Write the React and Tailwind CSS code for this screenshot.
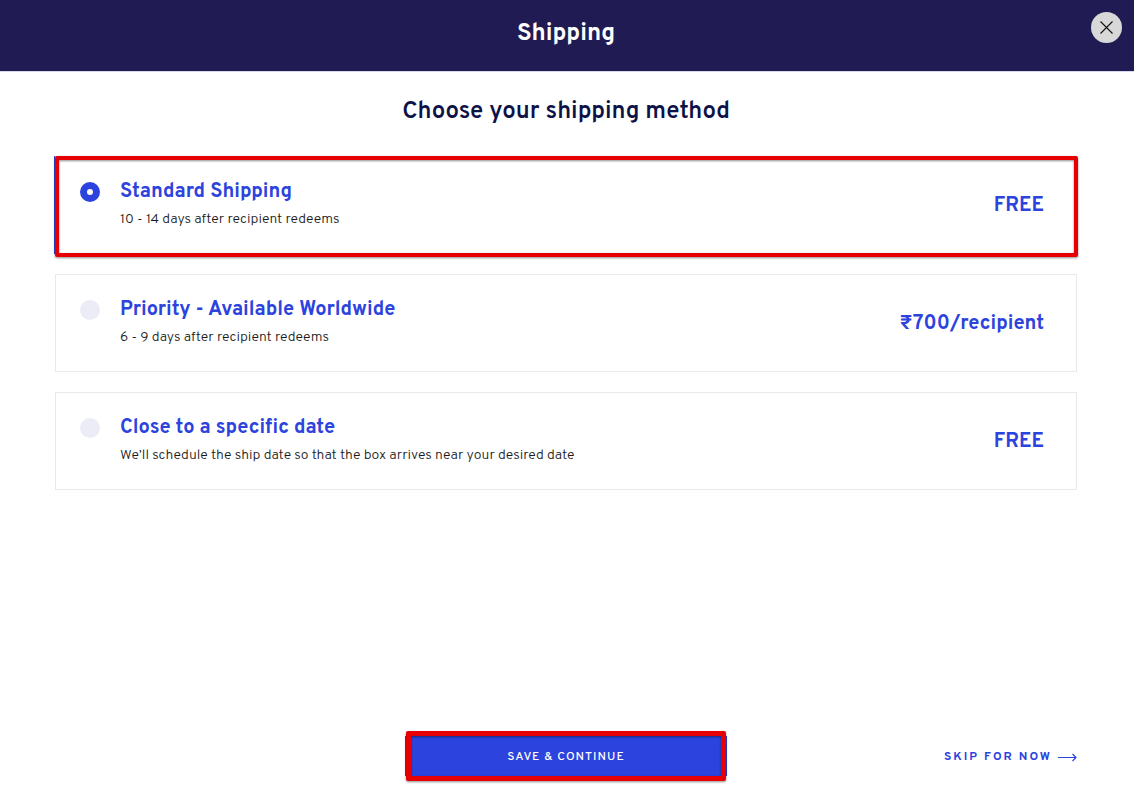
import React, { useState } from "react";

const methods = [
  {
    id: "standard",
    title: "Standard Shipping",
    description: "10 - 14 days after recipient redeems",
    price: "FREE"
  },
  {
    id: "priority",
    title: "Priority - Available Worldwide",
    description: "6 - 9 days after recipient redeems",
    price: "₹700/recipient"
  },
  {
    id: "specific-date",
    title: "Close to a specific date",
    description: "We’ll schedule the ship date so that the box arrives near your desired date",
    price: "FREE"
  }
];

// red frame drawn over the highlighted controls
const Highlight = ({ className }) => (
  <span
    aria-hidden="true"
    className={`pointer-events-none absolute rounded-[2px] border-[#e60004] drop-shadow-[0_1px_1px_rgba(0,0,0,0.45)] ${className}`}
  />
);

const ShippingOption = ({ method, checked, onChange }) => (
  <label
    htmlFor={method.id}
    className={`relative flex h-[98px] cursor-pointer items-center border border-[#e9e9ea] pl-6 pr-8 ${
      checked ? "shadow-[-1px_0_0_#2c43dd]" : ""
    }`}
  >
    <input
      type="radio"
      id={method.id}
      name="shippingMethod"
      value={method.id}
      checked={checked}
      onChange={onChange}
      className="mb-[26px] size-5 shrink-0 cursor-pointer appearance-none rounded-full bg-[#ebecf5] checked:border-[7px] checked:border-[#2c43dd] checked:bg-white"
    />
    <span className="ml-5 mt-0.5 flex flex-1 flex-col">
      <span className="text-[20px] font-bold leading-7 text-[#2c43dd]">{method.title}</span>
      <span className="text-[14px] font-light leading-7 text-[#1a1a1a]">{method.description}</span>
    </span>
    <span className="mt-0.5 text-[20px] font-bold leading-7 text-[#2c43dd]">{method.price}</span>
    {checked && <Highlight className="-bottom-1 -right-0.5 -left-px -top-px border-4" />}
  </label>
);

const App = () => {
  const [selected, setSelected] = useState("standard");

  return (
    <div className="flex min-h-screen flex-col bg-white font-['Overpass','Inter','Noto_Sans',sans-serif]">

      {/* HEADER */}
      <header className="relative border-b border-[#d9d7ea] bg-[#201b52] pb-[21px] pt-[18px] pr-0.5 text-center">
        <h1 className="text-[24px] font-bold leading-8 text-white">Shipping</h1>
        <button
          type="button"
          aria-label="Close"
          className="absolute right-3 top-3 flex size-[31px] items-center justify-center rounded-full bg-[#d8d8d8]"
        >
          <svg width="13" height="13" viewBox="0 0 13 13" fill="none" stroke="#111111" strokeWidth="1.1">
            <path d="M0.5 0.5l12 12M12.5 0.5l-12 12" />
          </svg>
        </button>
      </header>

      {/* SHIPPING METHODS */}
      <main className="flex-1 pl-[55px] pr-[57px] pt-6">
        <h2 className="text-center text-[24px] font-semibold leading-8 text-[#0d1247]">
          Choose your shipping method
        </h2>
        <div className="mt-7 flex flex-col gap-5">
          {methods.map((method) => (
            <ShippingOption
              key={method.id}
              method={method}
              checked={selected === method.id}
              onChange={() => setSelected(method.id)}
            />
          ))}
        </div>
      </main>

      {/* FOOTER */}
      <footer className="grid grid-cols-[1fr_322px_1fr] items-center pb-[19px] pl-[55px] pr-[57px]">
        <button
          type="button"
          className="relative col-start-2 h-10 bg-[#2c43dd] pt-0.5 text-[12px] font-medium tracking-[1px] text-white"
        >
          SAVE &amp; CONTINUE
          <Highlight className="-inset-y-[5px] inset-x-px border-[5px]" />
        </button>
        <a
          href="#skip"
          className="flex items-center gap-1.5 justify-self-end pt-0.5 text-[12px] font-bold tracking-[2px] text-[#2c43dd]"
        >
          SKIP FOR NOW
          <svg width="19" height="9" viewBox="0 0 19 9" fill="none" stroke="currentColor" strokeWidth="1.2">
            <path d="M0 4.5h18M14.5 1L18 4.5 14.5 8" />
          </svg>
        </a>
      </footer>

    </div>
  );
};

export default App;
